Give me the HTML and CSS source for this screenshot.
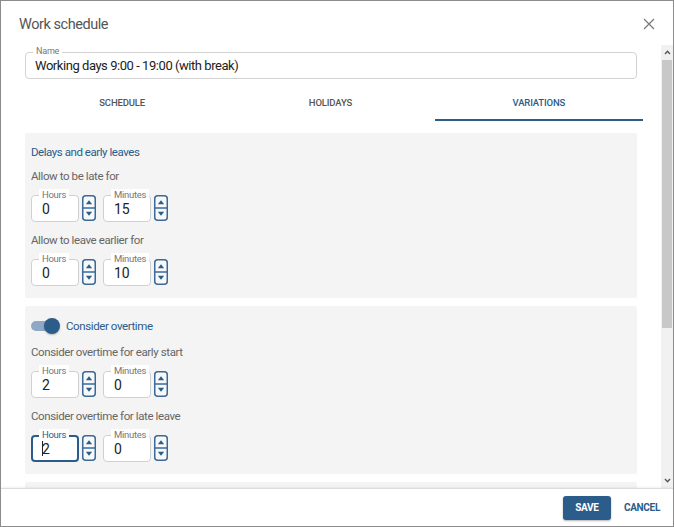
FILE: index.html
```html
<!DOCTYPE html>
<html>
<head>
<meta charset="utf-8">
<link rel="stylesheet" href="styles.css">
</head>
<body>
<div class="dialog">
  <div class="header">
    <div class="title">Work schedule</div>
    <svg class="close" width="12" height="12" viewBox="0 0 12 12"><path d="M1 1 L11 11 M11 1 L1 11" stroke="#7a7a7a" stroke-width="1.3" fill="none"/></svg>
  </div>
  <div class="main">
    <div class="content">
      <div class="field">
        <span class="field-label">Name</span>
        <span class="field-value">Working days 9:00 - 19:00 (with break)</span>
      </div>
      <div class="tabs">
        <div class="tab">Schedule</div>
        <div class="tab">Holidays</div>
        <div class="tab active">Variations</div>
      </div>

      <div class="section">
        <div class="section-title">Delays and early leaves</div>
        <div class="sublabel">Allow to be late for</div>
        <div class="row">
          <div class="num"><span class="num-label">Hours</span><span class="num-value">0</span></div>
          <svg class="spin" width="14" height="26" viewBox="0 0 14 26"><rect x="0.75" y="0.75" width="12.5" height="24.5" rx="3" fill="#f6f8fa" stroke="#3b6896" stroke-width="1.5"/><line x1="1" y1="13" x2="13" y2="13" stroke="#3b6896" stroke-width="1.5"/><path d="M3.8 9.2 L7 5.3 L10.2 9.2Z" fill="#2b5c8a"/><path d="M3.8 16.8 L7 20.7 L10.2 16.8Z" fill="#2b5c8a"/></svg>
          <div class="num"><span class="num-label">Minutes</span><span class="num-value">15</span></div>
          <svg class="spin" width="14" height="26" viewBox="0 0 14 26"><rect x="0.75" y="0.75" width="12.5" height="24.5" rx="3" fill="#f6f8fa" stroke="#3b6896" stroke-width="1.5"/><line x1="1" y1="13" x2="13" y2="13" stroke="#3b6896" stroke-width="1.5"/><path d="M3.8 9.2 L7 5.3 L10.2 9.2Z" fill="#2b5c8a"/><path d="M3.8 16.8 L7 20.7 L10.2 16.8Z" fill="#2b5c8a"/></svg>
        </div>
        <div class="sublabel">Allow to leave earlier for</div>
        <div class="row">
          <div class="num"><span class="num-label">Hours</span><span class="num-value">0</span></div>
          <svg class="spin" width="14" height="26" viewBox="0 0 14 26"><rect x="0.75" y="0.75" width="12.5" height="24.5" rx="3" fill="#f6f8fa" stroke="#3b6896" stroke-width="1.5"/><line x1="1" y1="13" x2="13" y2="13" stroke="#3b6896" stroke-width="1.5"/><path d="M3.8 9.2 L7 5.3 L10.2 9.2Z" fill="#2b5c8a"/><path d="M3.8 16.8 L7 20.7 L10.2 16.8Z" fill="#2b5c8a"/></svg>
          <div class="num"><span class="num-label">Minutes</span><span class="num-value">10</span></div>
          <svg class="spin" width="14" height="26" viewBox="0 0 14 26"><rect x="0.75" y="0.75" width="12.5" height="24.5" rx="3" fill="#f6f8fa" stroke="#3b6896" stroke-width="1.5"/><line x1="1" y1="13" x2="13" y2="13" stroke="#3b6896" stroke-width="1.5"/><path d="M3.8 9.2 L7 5.3 L10.2 9.2Z" fill="#2b5c8a"/><path d="M3.8 16.8 L7 20.7 L10.2 16.8Z" fill="#2b5c8a"/></svg>
        </div>
      </div>

      <div class="section section2">
        <div class="toggle-row">
          <span class="toggle"><span class="knob"></span></span>
          <span class="toggle-text">Consider overtime</span>
        </div>
        <div class="sublabel first">Consider overtime for early start</div>
        <div class="row">
          <div class="num"><span class="num-label">Hours</span><span class="num-value">2</span></div>
          <svg class="spin" width="14" height="26" viewBox="0 0 14 26"><rect x="0.75" y="0.75" width="12.5" height="24.5" rx="3" fill="#f6f8fa" stroke="#3b6896" stroke-width="1.5"/><line x1="1" y1="13" x2="13" y2="13" stroke="#3b6896" stroke-width="1.5"/><path d="M3.8 9.2 L7 5.3 L10.2 9.2Z" fill="#2b5c8a"/><path d="M3.8 16.8 L7 20.7 L10.2 16.8Z" fill="#2b5c8a"/></svg>
          <div class="num"><span class="num-label">Minutes</span><span class="num-value">0</span></div>
          <svg class="spin" width="14" height="26" viewBox="0 0 14 26"><rect x="0.75" y="0.75" width="12.5" height="24.5" rx="3" fill="#f6f8fa" stroke="#3b6896" stroke-width="1.5"/><line x1="1" y1="13" x2="13" y2="13" stroke="#3b6896" stroke-width="1.5"/><path d="M3.8 9.2 L7 5.3 L10.2 9.2Z" fill="#2b5c8a"/><path d="M3.8 16.8 L7 20.7 L10.2 16.8Z" fill="#2b5c8a"/></svg>
        </div>
        <div class="sublabel">Consider overtime for late leave</div>
        <div class="row">
          <div class="num focused"><span class="num-label">Hours</span><span class="num-value"><span class="caret"></span>2</span></div>
          <svg class="spin" width="14" height="26" viewBox="0 0 14 26"><rect x="0.75" y="0.75" width="12.5" height="24.5" rx="3" fill="#f6f8fa" stroke="#3b6896" stroke-width="1.5"/><line x1="1" y1="13" x2="13" y2="13" stroke="#3b6896" stroke-width="1.5"/><path d="M3.8 9.2 L7 5.3 L10.2 9.2Z" fill="#2b5c8a"/><path d="M3.8 16.8 L7 20.7 L10.2 16.8Z" fill="#2b5c8a"/></svg>
          <div class="num"><span class="num-label">Minutes</span><span class="num-value">0</span></div>
          <svg class="spin" width="14" height="26" viewBox="0 0 14 26"><rect x="0.75" y="0.75" width="12.5" height="24.5" rx="3" fill="#f6f8fa" stroke="#3b6896" stroke-width="1.5"/><line x1="1" y1="13" x2="13" y2="13" stroke="#3b6896" stroke-width="1.5"/><path d="M3.8 9.2 L7 5.3 L10.2 9.2Z" fill="#2b5c8a"/><path d="M3.8 16.8 L7 20.7 L10.2 16.8Z" fill="#2b5c8a"/></svg>
        </div>
      </div>

      <div class="section section3"></div>
    </div>
    <div class="scrollbar">
      <div class="sb-btn"><svg width="7" height="5" viewBox="0 0 7 5"><path d="M1 4 L3.5 1.3 L6 4" stroke="#555" stroke-width="1.4" fill="none"/></svg></div>
      <div class="sb-thumb"></div>
      <div class="sb-spacer"></div>
      <div class="sb-btn"><svg width="7" height="5" viewBox="0 0 7 5"><path d="M1 1 L3.5 3.7 L6 1" stroke="#555" stroke-width="1.4" fill="none"/></svg></div>
    </div>
  </div>
  <div class="footer">
    <button class="btn-save">Save</button>
    <button class="btn-cancel">Cancel</button>
  </div>
</div>
</body>
</html>
```
FILE: styles.css
```css
* { box-sizing: border-box; }
html, body { margin: 0; padding: 0; background: #fff; }
body { font-family: Roboto, "Liberation Sans", Arial, sans-serif; }

.dialog {
  width: 674px;
  height: 527px;
  border: 1px solid #8c8c8c;
  background: #fff;
  display: flex;
  flex-direction: column;
  overflow: hidden;
}

.header {
  height: 43px;
  flex: none;
  display: flex;
  align-items: center;
  justify-content: space-between;
  padding: 3px 18px 0 18px;
}
.title { font-size: 14.5px; letter-spacing: -0.45px; color: #555; }

.main { flex: 1; display: flex; min-height: 0; overflow: hidden; }
.content { flex: 1; padding: 8px 24px 0 24px; overflow: hidden; }

.field {
  position: relative;
  height: 27px;
  border: 1px solid #d2d2d2;
  border-radius: 4px;
  display: flex;
  align-items: center;
  padding-left: 9px;
}
.field-label {
  position: absolute;
  top: -7px;
  left: 7px;
  padding: 0 3px;
  background: #fff;
  font-size: 9px;
  letter-spacing: -0.2px;
  line-height: 11px;
  color: #777;
}
.field-value { font-size: 13px; letter-spacing: -0.45px; color: #222; }

.tabs {
  display: flex;
  margin: 5px -6px 0 -7px;
  height: 37px;
}
.tab {
  flex: 1;
  display: flex;
  align-items: center;
  justify-content: center;
  text-transform: uppercase;
  font-size: 9.5px;
  letter-spacing: -0.15px;
  font-weight: 500;
  color: #555;
  border-bottom: 2px solid transparent;
  padding-top: 2px;
}
.tab.active { color: #2b5c8a; border-bottom-color: #2b5c8a; }

.section {
  background: #f4f4f4;
  border-radius: 2px;
  margin-top: 12px;
  padding: 12px 6px 12px 6px;
}
.section2 { margin-top: 8px; }
.section3 { margin-top: 8px; height: 40px; }

.section-title { font-size: 11.5px; letter-spacing: -0.45px; line-height: 14px; color: #2b5c8a; }
.sublabel { font-size: 11.5px; letter-spacing: -0.4px; line-height: 14px; color: #666; margin-top: 10px; }
.row + .sublabel { margin-top: 11px; }
.sublabel.first { margin-top: 12px; }

.row { display: flex; align-items: flex-start; margin-top: 12px; }

.num {
  position: relative;
  width: 48px;
  height: 27px;
  background: #fff;
  border: 1px solid #d0d0d0;
  border-radius: 4px;
  display: flex;
  align-items: center;
  padding-left: 10px;
}
.num-label {
  position: absolute;
  top: -7px;
  left: 7px;
  padding: 0 3px;
  background: #fff;
  font-size: 9.5px;
  letter-spacing: -0.3px;
  line-height: 11px;
  color: #777;
}
.num-value { font-size: 14px; color: #222; display: flex; align-items: center; }
.num.focused { border: 2px solid #2b5c8a; padding-left: 9px; }
.num.focused .num-label { color: #2b5c8a; top: -8px; left: 6px; }
.caret { width: 1px; height: 15px; background: #222; margin-right: -1px; }

.spin { display: block; margin-left: 3px; margin-right: 7px; flex: none; }

.toggle-row { display: flex; align-items: center; height: 14px; margin-top: 1px; }
.toggle {
  position: relative;
  width: 26px;
  height: 10px;
  border-radius: 5px;
  background: #8fa8c4;
  flex: none;
}
.knob {
  position: absolute;
  right: -3px;
  top: -3px;
  width: 16px;
  height: 16px;
  border-radius: 50%;
  background: #2b5c8a;
  box-shadow: 0 1px 2px rgba(0,0,0,0.25);
}
.toggle-text { margin-left: 9px; font-size: 11.5px; letter-spacing: -0.4px; color: #2b5c8a; }

.scrollbar {
  width: 12px;
  flex: none;
  background: #f1f1f1;
  display: flex;
  flex-direction: column;
  margin-top: 1px;
}
.sb-btn { height: 15px; display: flex; align-items: center; justify-content: center; flex: none; }
.sb-thumb { height: 268px; background: #c8c8c8; margin: 0 1px; flex: none; }
.sb-spacer { flex: 1; }

.footer {
  height: 38px;
  flex: none;
  border-top: 1px solid #dcdcdc;
  box-shadow: 0 -1px 2px rgba(0,0,0,0.06);
  display: flex;
  align-items: center;
  justify-content: flex-end;
  padding-right: 13px;
}
.btn-save {
  width: 48px;
  height: 24px;
  border: none;
  border-radius: 3px;
  background: #2b5c8a;
  color: #fff;
  font-family: inherit;
  font-size: 10px;
  font-weight: 700;
  letter-spacing: -0.3px;
  text-transform: uppercase;
  box-shadow: 0 1px 2px rgba(0,0,0,0.3);
  padding: 0;
}
.btn-cancel {
  margin-left: 13px;
  border: none;
  background: transparent;
  color: #2b5c8a;
  font-family: inherit;
  font-size: 10px;
  font-weight: 700;
  letter-spacing: -0.3px;
  text-transform: uppercase;
  padding: 0;
}
```
